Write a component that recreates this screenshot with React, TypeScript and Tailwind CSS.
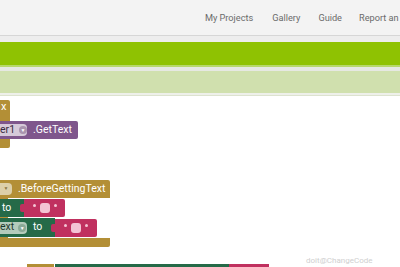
const font = { fontFamily: 'Roboto, "Liberation Sans", sans-serif' }

function TextBlock({ left, top, width }: { left: number; top: number; width: number }) {
  return (
    <div className="absolute flex items-center" style={{ left, top, height: 18 }}>
      <div className="w-[4px] h-[8px] bg-[#c0305f] rounded-l-[2px]" />
      <div className="h-full bg-[#c0305f] flex items-center justify-center gap-[4px] rounded-r-[2px]" style={{ width: width - 4 }}>
        <span className="w-[3px] h-[3px] rounded-full bg-[#f3c4d4] -mt-[6px]" />
        <span className="w-[10px] h-[10px] rounded-[3px] bg-[#f3c4d4]" />
        <span className="w-[3px] h-[3px] rounded-full bg-[#f3c4d4] -mt-[6px]" />
      </div>
    </div>
  )
}

export default function App() {
  return (
    <div className="w-[400px] h-[267px] overflow-hidden bg-white relative" style={font}>
      {/* top nav */}
      <div className="h-[36px] bg-[#f3f3f3] flex items-center justify-end pt-[1px] text-[9.2px] text-[#6b6b6b] border-b border-[#d6d6d6]">
        <span className="mr-[19px]">My Projects</span>
        <span className="mr-[18px]">Gallery</span>
        <span className="mr-[17px]">Guide</span>
        <span className="w-[41px] whitespace-nowrap">Report an</span>
      </div>
      <div className="h-[6px] bg-[#ededed]" />
      <div className="h-[25px] bg-[#8fc202] border-b-[2px] border-[#b6d86a]" />
      <div className="h-[4px] bg-[#e6e8e2]" />
      <div className="h-[22px] bg-[#d0e0ae]" />
      <div className="h-[3px] bg-[#eef0ea] border-b border-[#dde3cf]" />

      {/* blocks workspace */}
      <div className="absolute left-0 top-[100px] w-[10px] h-[48px] bg-[#b38f36] rounded-r-[2px]">
        <span className="absolute left-[1px] top-[1px] text-[11px] leading-none text-white">x</span>
      </div>
      <div className="absolute left-0 top-[121px] w-[78px] h-[18px] bg-[#7f568c] rounded-r-[2px] flex items-center text-[10.5px] text-white">
        <div className="h-[12px] w-[27px] bg-[#d6c9d9] rounded-r-[4px] flex items-center text-[#3a2a40]">
          <span className="leading-none">er1</span>
          <span className="ml-[4px] w-[8px] h-[8px] rounded-full bg-[#a994ae] text-white text-[5px] leading-[8px] text-center">▼</span>
        </div>
        <span className="ml-[6px] leading-none">.GetText</span>
      </div>

      <div className="absolute left-0 top-[180px] w-[110px] h-[67px] flex flex-col">
        <div className="h-[18px] bg-[#b38f36] rounded-tr-[2px] flex items-center text-[10.5px] text-white">
          <div className="h-[12px] w-[12px] bg-[#dccfa8] rounded-r-[4px] flex items-center justify-center">
            <span className="text-[5px] text-[#8a7440]">▼</span>
          </div>
          <span className="ml-[6px] leading-none">.BeforeGettingText</span>
        </div>
        <div className="flex-1 w-[8px] bg-[#b38f36]" />
        <div className="h-[9px] bg-[#b38f36] rounded-br-[2px]" />
      </div>
      <div className="absolute left-0 top-[199px] w-[25px] h-[18px] bg-[#256a48] flex items-center text-[10.5px] text-white pl-[2px]">
        to
      </div>
      <TextBlock left={20} top={199} width={45} />
      <div className="absolute left-0 top-[218px] w-[55px] h-[19px] bg-[#256a48] flex items-center text-[10.5px] text-white">
        <div className="h-[12px] w-[27px] bg-[#b4cbbb] rounded-r-[4px] flex items-center text-[#1e3a2c]">
          <span className="leading-none">ext</span>
          <span className="ml-[4px] w-[8px] h-[8px] rounded-full bg-[#8aa996] text-white text-[5px] leading-[8px] text-center">▼</span>
        </div>
        <span className="ml-[6px] leading-none">to</span>
      </div>
      <TextBlock left={51} top={219} width={46} />

      {/* partly visible blocks at the bottom */}
      <div className="absolute left-[27px] top-[264px] flex h-[4px]">
        <div className="w-[27px] bg-[#b38f36]" />
        <div className="w-[174px] bg-[#256a48] ml-[1px]" />
        <div className="w-[40px] bg-[#c0305f]" />
      </div>

      <span className="absolute left-[306px] top-[255px] text-[8px] text-[#cfcfcf]">doit@ChangeCode</span>
    </div>
  )
}
